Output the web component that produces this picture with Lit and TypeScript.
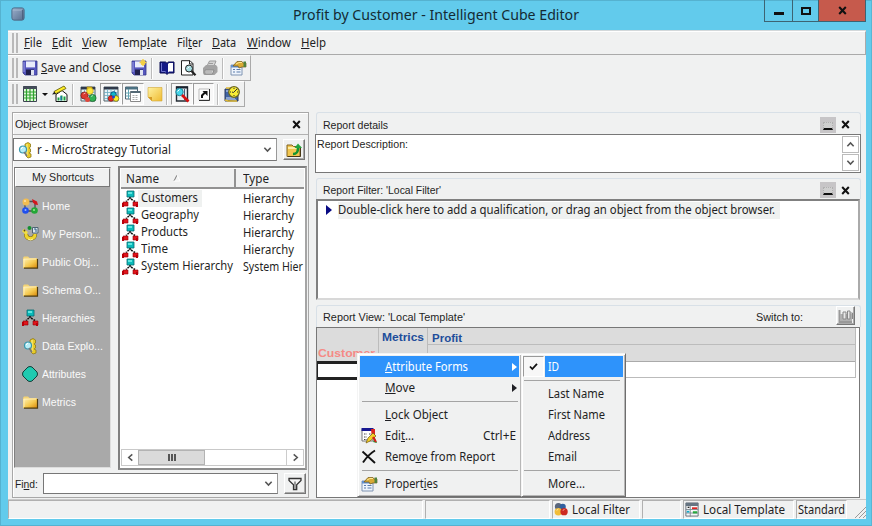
import { LitElement, html, css, svg, nothing } from "lit";
import type { TemplateResult } from "lit";
import { customElement, property, query } from "lit/decorators.js";
import { styleMap } from "lit/directives/style-map.js";

/* A single line label whose glyphs are condensed or stretched to a set width. */
@customElement("fit-text")
class FitText extends LitElement {
  static styles = css`
    :host { display: inline-block; flex: none; white-space: nowrap; }
    .in { display: inline-block; transform-origin: 0 50%; }
  `;
  @property({ type: Number }) w = 0;
  @query(".in") inner!: HTMLElement;

  render() {
    return html`<span class="in"><slot></slot></span>`;
  }

  updated() {
    const natural = this.inner.offsetWidth;
    if (!natural || !this.w) return;
    this.style.width = `${this.w}px`;
    this.inner.style.transform = `scaleX(${this.w / this.inner.getBoundingClientRect().width})`;
  }
}

const floppy = svg`<path d="M1 1h14v14H3l-2-2z" fill="#5556bd" stroke="#34358c" stroke-width=".8"/><path d="M4 1.4h9v6H4z" fill="#e9ecfb"/><path d="M4 9.5h8V15H4z" fill="#20214e"/><path d="M9 10h3v5H9z" fill="#dfe3f1"/><path d="M2 2v10" stroke="#9fa0ea"/>`;
const tree = svg`<path d="M5 0h7v6H5z" fill="#0ababa" stroke="#056c72" stroke-width=".8"/><path d="M6 1h4v2H6z" fill="#5ee6e0"/><path d="M8 6v3M7 8L4 10.500M9 8l4 2.500" stroke="#111" stroke-width="1.500" stroke-dasharray="2 1"/><path d="M1 11h5v4H1zM11 11h5v4h-5z" fill="#e2141b" stroke="#8d0008" stroke-width=".6"/><path d="M0 12h2v4H0zM14 13h2v3h-2z" fill="#b80009"/>`;
const folder = svg`<defs><linearGradient id="f" x2="1" y2="1"><stop stop-color="#fff0b0"/><stop offset=".55" stop-color="#f5c84c"/><stop offset="1" stop-color="#d98a0c"/></linearGradient></defs><path d="M1 4l1-1.500h4L7.500 4H15v10H1z" fill="#f3d375"/><path d="M1.500 5H15v9H1.500z" fill="url(#f)"/><path d="M2 14.200h13.500V5" fill="none" stroke="#4f3c10" stroke-width="1.200"/><path d="M2 13V5h12" fill="none" stroke="#fff3c4" stroke-width=".8"/>`;
const gridBase = svg`<path d="M1 1h14v14H1z" fill="#e9f3f6" stroke="#52636b"/><path d="M1 1h14v2.500H1z" fill="#30394a"/><path d="M4.500 3v12M8 3v12M11.500 3v12M1 6.500h14M1 9.500h14M1 12.500h14" stroke="#6babc0" stroke-width=".8"/>`;
const hand = svg`<path d="M1 5h11v10H1z" fill="#eef4fc" stroke="#7e94b2"/><path d="M1 5h11v2.500H1z" fill="#608fce"/><path d="M3 9.500h2M3 12h2M6.500 9.500h4M6.500 12h4" stroke="#5a7cab"/><path d="M3 6l4-4.500h5L13 3h3v4h-4L9 8 8 6H4z" fill="#d8a935" stroke="#755a1a" stroke-width=".7"/><path d="M13.500 1.500H16V7h-2.500z" fill="#51823c"/><path d="M6 4l3-1.500h3" stroke="#ffe890" fill="none"/>`;
const explore = svg`<path d="M8 2l3-1.500L13.500 2v3L12 6l1.500 1v3L12 11l2 1v3l-3 1-2-2V9L8 5z" fill="#e8cb26" stroke="#8f7a17" stroke-width=".8"/><path d="M10 2v12" stroke="#fff49b"/><circle cx="6" cy="7.500" r="3.500" fill="#b7edf6" stroke="#3897ad" stroke-width="1.200"/><path d="M7 10l3 4" stroke="#777" stroke-width="1.500"/><path d="M4 7l2-2" stroke="#fff"/>`;

const icons: Record<string, TemplateResult | ReturnType<typeof svg>> = {
  floppy,
  floppyNew: svg`${floppy}<path d="M12-1v7M8.500 2.500h7M10 .5l4 4M14 .5l-4 4" stroke="#f4ce45" stroke-width="1.400"/>`,
  book: svg`<path d="M1 2h5.500L8 3.300 9.500 2H15v11H9.500L8 14.500 6.500 13H1z" fill="#151a86" stroke="#0a0d50"/><path d="M9 4l1-1h4v8.500h-4l-1 1z" fill="#fff"/><path d="M2.500 3v8.500H6l1 .8" fill="none" stroke="#6d73cd"/>`,
  preview: svg`<path d="M1.500.7h8.500l3 3V15H1.500z" fill="#fff" stroke="#222"/><path d="M9.500 1v3H13" fill="none" stroke="#222"/><circle cx="9" cy="8.500" r="3.500" fill="#a6dde1" stroke="#222"/><path d="M11.500 11l4 4.300" stroke="#222" stroke-width="2.200"/><path d="M7.500 8.500L9.500 6.500" stroke="#fff"/>`,
  printer: svg`<path d="M5 6l2.500-5H14l-2 5z" fill="#d4d4d4" stroke="#999"/><path d="M1 8l3-3h10l1.500 2v5l-3 3H2l-1-2z" fill="#a3a3a3"/><path d="M3 10h9l-1.500 4H3z" fill="#dadada" stroke="#8b8b8b"/><path d="M4 12h6M7 3.500h4" stroke="#9b9b9b"/>`,
  props: hand,
  grid: svg`<path d="M1.500.5h13v15h-13z" fill="#e6f9de" stroke="#3c4451"/><path d="M1 .5h14v2.500H1z" fill="#454d5a"/><path d="M4.500 3v12M8 3v12M11.500 3v12M1.500 6h13M1.500 9h13M1.500 12h13" stroke="#2da32d" stroke-width="1.200"/>`,
  chart: svg`<path d="M4 8.500L10 4.500l5 4v7H4z" fill="#fff" stroke="#111"/><path d="M6.500 14.500v-3M9.500 14.500V9.500M12.500 14.500v-4" stroke="#17a040" stroke-width="2"/><path d="M9 14.500V10" stroke="#1565d6"/><path d="M2 5.500L12 0l2 2.500L3 8z" fill="#ffed26" stroke="#6b6510" stroke-width=".9"/><path d="M0 8.500l2.500-3L4 8z" fill="#222"/>`,
  stack: svg`${gridBase}<path d="M7 1h5v4.500l-2 2-3-2z" fill="#f4d229" stroke="#a38208" stroke-width=".7"/><circle cx="4.500" cy="9.500" r="3.600" fill="#d93830" stroke="#7d1813" stroke-width=".7"/><circle cx="12.500" cy="12" r="3.600" fill="#32b253" stroke="#155f28" stroke-width=".7"/><circle cx="7.500" cy="13.500" r="2.500" fill="#e1463b"/><circle cx="10" cy="5" r="3.300" fill="#ffe83c" stroke="#a38208" stroke-width=".5"/><path d="M3.500 8l2-1M11 10.500l2-1" stroke="#fff" stroke-opacity=".6"/>`,
  gridBalls: svg`${gridBase}<circle cx="10.500" cy="8.500" r="2.800" fill="#11b7c7" stroke="#064e83"/><circle cx="8" cy="12.500" r="2.800" fill="#eb2b23" stroke="#76100d" stroke-width=".7"/><circle cx="13" cy="12.500" r="2.800" fill="#fff127" stroke="#78720b" stroke-width=".7"/><circle cx="10.500" cy="11" r="1.500" fill="#2440d0"/>`,
  gridPages: svg`<path d="M.5 1h12v12H.5z" fill="#fff" stroke="#516370"/><path d="M.5 1h12v2.500H.5z" fill="#4b7182"/><path d="M3.500 3v10M.5 7h5M.5 10h5" stroke="#62a4b2"/><path d="M5.500 5.500h10v10h-10z" fill="#fff" stroke="#888"/><path d="M5.500 6h10" stroke="#536874" stroke-width="2"/><path d="M7.500 9.500h6M7.500 11.500h6M7.500 13.500h6" stroke="#aaa" stroke-dasharray="2 1"/>`,
  note: svg`<defs><linearGradient id="n" x2="1" y2="1"><stop stop-color="#fff2a1"/><stop offset="1" stop-color="#efbb31"/></linearGradient></defs><path d="M1 1.500h14V15H5l-4-4z" fill="url(#n)" stroke="#d0a636" stroke-width=".6"/><path d="M1 11l4 4v-4z" fill="#d59b26"/>`,
  search: svg`<path d="M2.500 1h11v14h-11z" fill="#e6edf1" stroke="#252c35" stroke-width="1.400"/><path d="M2 1.500h12" stroke="#1b222f" stroke-width="2"/><path d="M10.500 3v11" stroke="#4a5b78"/><circle cx="5.500" cy="6" r="3.700" fill="#46d5e9" stroke="#238194"/><path d="M8 9l6.500 6.500" stroke="#d91010" stroke-width="2.600"/><path d="M3.500 5.500l2-2" stroke="#fff"/>`,
  shortcut: svg`<path d="M3 3h10.500v11H3z" fill="#fff" stroke="#bbb"/><path d="M13.500 3v11.500H3" fill="none" stroke="#333"/><path d="M6 12V9.500L9 6.500" fill="none" stroke="#111" stroke-width="2"/><path d="M6.500 5h5v5z" fill="#111"/>`,
  clock: svg`<path d="M1 3h9l4 3v9H1z" fill="#4265a4" stroke="#28385e"/><path d="M2 5h7M2 12h9M2 14h10" stroke="#d8e5f8"/><path d="M2 2h6M1 14l3 1h9" stroke="#e0ba36" stroke-width="1.700"/><circle cx="10" cy="6" r="5.300" fill="#f7ec35" stroke="#6c6720" stroke-width="1.300"/><path d="M13 3l-3.500 3.500L8 6M10 2v1M10 10v-1M6 6h1M13 6h1" fill="none" stroke="#303030"/>`,
  tree, folder, explore,
  home: svg`<path d="M5 3.500h6M13 5v6M11 13H5M3 11V5" stroke="#4b4e50" stroke-width="1.300"/><circle cx="4" cy="4" r="3.500" fill="#f2bd51"/><path d="M10 1l5 2.500 1 3.500-3-.5-2-2z" fill="#d3171d"/><circle cx="3.500" cy="12.500" r="3.300" fill="#2050ee"/><circle cx="12.500" cy="12.500" r="3.300" fill="#23a736"/><circle cx="3" cy="3" r="1" fill="#ffe4ad"/><circle cx="3.500" cy="12" r="1" fill="#95b5ff"/><circle cx="12" cy="12" r="1" fill="#93ed8c"/>`,
  personal: svg`<path d="M4 8c0 3 2 4.500 4.500 4.500S13 11 13 8" fill="none" stroke="#806d10" stroke-width="4.200"/><path d="M4 8c0 3 2 4.500 4.500 4.500S13 11 13 8" fill="none" stroke="#efd52c" stroke-width="3"/><path d="M1 4l4 3.500" stroke="#f2df42" stroke-width="3"/><circle cx="7.500" cy="2" r="2" fill="#138f31"/><path d="M10.500 1.500H16V7h-5.500z" fill="#dbe7ed" stroke="#4e6474"/><path d="M12 3h2v3" stroke="#315c85" fill="none"/><path d="M6 13l2.500 1 2.500-1" fill="none" stroke="#fff8a0"/><circle cx="2.500" cy="4.500" r=".9" fill="#544515"/>`,
  attribute: svg`<path d="M8 .5l2 .5 5 5 .5 2-.5 2-5 5-2 .5-2-.5-5-5L.5 8 1 6l5-5z" fill="#1fcab0" stroke="#143e39"/>`,
  up: svg`<path d="M1 3h5l1.500 1.500H14v10H1z" fill="#f2c64f" stroke="#836420"/><path d="M2 5h11v2H2z" fill="#ffeda3"/><path d="M7 12c4 0 5-2 5-6" fill="none" stroke="#159431" stroke-width="2.600"/><path d="M8.500 6L12 1.500 16 6z" fill="#22a63c"/><path d="M2 14.500h12.500V6" stroke="#483816" fill="none"/>`,
  funnel: svg`<path d="M2 2.500h12v2L9.700 8.800V13.500H6.500V8.800L2 4.500z" fill="#f5f5f5" stroke="#333" stroke-width="1.300"/><path d="M8 5.500v7.500" stroke="#999" stroke-width="2"/>`,
  edit: svg`<path d="M1 1.500h11v11.500H1z" fill="#fff" stroke="#777"/><path d="M.5 1.500h12" stroke="#171891" stroke-width="3"/><path d="M3 6h3M3 9h3M3 11.500h3M8 6h2" stroke="#444" stroke-dasharray="1.500 1"/><path d="M10 1h4v10h-3z" fill="#db251f"/><path d="M14 10l2 5-4-1" fill="#19902b"/><path d="M5 15l2-5 5-5 3 3-6 5z" fill="#f3d02a" stroke="#73570b" stroke-width=".7"/><path d="M12 9l3 5" stroke="#d71d18" stroke-width="2"/>`,
  remove: svg`<path d="M1.500 2.500L14 14M14 1.500C9 4.500 5 9 2 13.500" fill="none" stroke="#111" stroke-width="1.900"/>`,
  filter: svg`<circle cx="5" cy="4.500" r="4" fill="#59677d"/><circle cx="10" cy="5" r="3.500" fill="#305f9f"/><circle cx="5" cy="10.500" r="4.300" fill="#f2bd38"/><circle cx="11.500" cy="10.500" r="4.200" fill="#cd2920"/><path d="M3 9l2-1.500M10 9l2-1" stroke="#fff" stroke-opacity=".7"/>`,
  template: svg`<path d="M1 .5h14v15H1z" fill="#f5f7f8" stroke="#5c6570"/><path d="M1 .5h14v3.500H1z" fill="#657482"/><path d="M6 4v12M1 8h14M1 12h14" stroke="#7b858e"/><path d="M8 5.500h6v2H8z" fill="#df2422"/><path d="M9 10h5v2.500H9z" fill="#25a73d"/><path d="M2 9.500h3v2H2z" fill="#13a9c7"/><path d="M3 5.500h2" stroke="#222" stroke-width="1.500"/>`,
  graph: svg`<path d="M1.500 2v12H14" fill="none" stroke="#999" stroke-width="2"/><path d="M2 6h12v7H2z" fill="#b0b0b0"/><path d="M5 11V4h3v7zM9.500 11V3H12v8z" fill="#e8e8e8" stroke="#888"/><path d="M12 5h2.500v6" fill="none" stroke="#888"/>`,
  app: svg`<defs><linearGradient id="a" x2="1" y2="1"><stop stop-color="#9bb0cb"/><stop offset="1" stop-color="#576e8e"/></linearGradient></defs><rect x="1" y="1" width="14" height="14" rx="2.500" fill="url(#a)" stroke="#49627f"/><path d="M2 3.500h10l1.500-1.500" stroke="#a9bad0" fill="none"/><path d="M13.300 3v11" stroke="#475a78"/>`,
};

const icon = (name: string, cls = "") =>
  html`<svg class="ic ${cls}" viewBox="0 0 16 16">${icons[name]}</svg>`;
const cross = (cls = "") =>
  html`<svg class="cross ${cls}" viewBox="0 0 9 9"><path d="M1.200 1L7.800 8M7.800 1L1.200 8" stroke="#111" stroke-width="2"/></svg>`;
const chev = (d: string) =>
  html`<svg class="chev" viewBox="0 0 10 10"><path d=${d} fill="none" stroke="#555" stroke-width="1.700"/></svg>`;
const DOWN = "M1.500 3L5 6.800 8.500 3";
const UP = "M1.500 7L5 3.200 8.500 7";
const LEFT = "M7 1.500L3 5l4 3.500";
const RIGHT = "M3 1.500L7 5 3 8.500";

interface MenuEntry { label: unknown; w: number; arrow?: boolean; key?: string; icon?: string; on?: boolean }

@customElement("app-root")
class AppRoot extends LitElement {
  static styles = css`
    * { box-sizing: border-box; }
    :host { display: block; width: 872px; height: 526px; overflow: hidden; }
    .win { position: relative; width: 872px; height: 526px; background: #62cbec; border: 1px solid #55b2d0; border-right-color: #57b7d5; display: flex; flex-direction: column; padding: 0 5px 6px 7px; font: 12px/16px "Noto Sans", "Open Sans", sans-serif; color: #1f1f24; }
    svg { display: block; flex: none; }
    .ic { width: 16px; height: 16px; overflow: visible; }
    .title { height: 29px; flex: none; display: flex; align-items: flex-start; padding-left: 3px; }
    .title .ic { width: 14px; height: 14px; margin-top: 6px; }
    .title .cap { margin: 3px 0 0 268px; font-size: 15px; line-height: 20px; color: #142a33; }
    .wb { display: flex; margin: -1px 0 0 auto; height: 22px; border: 1px solid #3d6473; border-top: 0; }
    .wb div { display: flex; align-items: center; justify-content: center; border-right: 1px solid #3d6473; }
    .wb .mn { width: 28px; } .wb .mx { width: 26px; } .wb .cl { width: 46px; border: 0; background: #c65a4c; }
    .dash { width: 10px; height: 3px; background: #111; margin-top: 5px; }
    .box { width: 10px; height: 8px; border: 2px solid #111; }
    .cross { width: 9px; height: 9px; }
    .client { flex: 1; min-height: 0; background: #f0f1f1; display: flex; flex-direction: column; border-top: 1px solid #d3d8da; }
    .bar { flex: none; display: flex; align-items: center; border-right: 1px solid #aaa; border-bottom: 1px solid #aaa; border-top: 1px solid #fff; align-self: flex-start; }
    .grip { width: 6px; height: 20px; margin-left: 4px; border: solid #b9b9b9; border-width: 0 2px; flex: none; }
    .menubar { width: 858px; height: 24px; }
    .menubar .names { display: flex; gap: 10.1px; margin-left: 5.5px; }
    .t1 { height: 26px; width: 243px; } .t2 { height: 26px; width: 237px; }
    .slot { display: flex; align-items: center; justify-content: center; flex: none; height: 22px; }
    .on { border: 1px solid; border-color: #9b9b9b #fff #fff #9b9b9b; background: #f8f8f8; }
    .sep { width: 2px; height: 21px; background: #bbb; border-right: 1px solid #fff; flex: none; }
    .caret { border: 3px solid transparent; border-top-color: #111; border-bottom: 0; }
    .w3 { width: 3px; } .w4 { width: 4px; } .w5 { width: 5px; } .w6 { width: 6px; } .w10 { width: 10px; }
    .main { flex: 1; min-height: 0; display: flex; padding: 5px 5px 0 4px; gap: 6px; }
    .left { width: 297px; height: 386px; border: 1px solid #a8a8a8; flex: none; box-shadow: inset 1px 1px #fff; }
    .ms { font-family: "Liberation Sans", Arial, sans-serif; font-size: 11px; line-height: 14px; }
    .lhead { height: 22px; display: flex; align-items: center; justify-content: space-between; padding: 1px 7px 0 2px; border-bottom: 1px solid #b1b1b1; }
    .row { display: flex; }
    .drop { border: 1px solid #777; border-right-color: #999; background: #fff; display: flex; align-items: center; justify-content: space-between; padding-right: 4px; width: 264px; height: 23px; }
    .drop .val { display: flex; align-items: center; gap: 4px; padding-left: 3px; }
    .chev { width: 9px; height: 9px; }
    .btn { width: 22px; height: 21px; border: 1px solid; border-color: #fff #777 #777 #fff; box-shadow: inset -1px -1px #aaa; display: flex; align-items: center; justify-content: center; }
    .r1 { margin-top: 3px; gap: 6px; align-items: center; }
    .r2 { margin: 5px 0 0 1px; height: 304px; gap: 7px; }
    .short { width: 97px; height: 301px; margin-top: 1px; background: #a9a9a9; border: 1px solid; border-color: #707070 #ddd #ddd #808080; }
    .shead { height: 19px; background: #f0f1f1; border: 1px solid; border-color: #fff #777 #777 #fff; text-align: center; padding-top: 1px; }
    .sitems { display: flex; flex-direction: column; color: #fafafa; padding-top: 5px; }
    .sitem { height: 28px; display: flex; align-items: center; gap: 4px; padding-left: 7px; }
    .list { width: 189px; height: 304px; border: 2px solid; border-color: #808080 #a5a5a5 #8c8c8c #808080; background: #fff; display: flex; flex-direction: column; overflow: hidden; padding: 0 1px 2px; }
    .cols { display: flex; height: 21px; background: #f0f1f1; border-top: 1px solid #fff; border-bottom: 2px solid #929292; flex: none; }
    .c1 { width: 115px; padding: 2px 0 0 5px; border-right: 2px solid #929292; display: flex; gap: 14px; }
    .c2 { padding: 2px 0 0 7px; }
    .sort { width: 8px; height: 8px; margin-top: 3px; }
    .rows { flex: 1; padding-top: 1px; }
    .lr { display: flex; height: 17px; align-items: center; margin-left: 1px; }
    .lr .nm { width: 105px; height: 17px; display: flex; flex: none; } .lr .nm span { padding: 0 4px 0 3px; height: 17px; }
    .lr .sel { background: #eff1f0; }
    .hs { display: flex; height: 17px; border: 1px solid #c9c9c9; flex: none; }
    .hs .e { width: 16px; display: flex; align-items: center; justify-content: center; }
    .thumb { width: 67px; background: #dadada; border: 1px solid #b3b3b3; display: flex; gap: 1px; align-items: center; justify-content: center; }
    .thumb i { width: 2px; height: 7px; background: #555; }
    .hs .fill { flex: 1; border-right: 1px solid #ccc; }
    .r3 { margin-top: 3px; align-items: center; gap: 6px; }
    .r3 .ms { width: 24px; padding-left: 2px; }
    .r3 .drop { width: 235px; height: 21px; }
    .right { flex: 1; display: flex; flex-direction: column; min-width: 0; }
    .ph { height: 22px; border: 1px solid #d8e0e7; border-bottom: 0; border-radius: 3px 3px 0 0; margin: 0 0 0 1px; display: flex; align-items: center; padding: 2px 10px 0 6px; flex: none; }
    .ph .mini { margin-left: auto; width: 16px; height: 16px; background: #c7c5c7; display: flex; align-items: flex-end; justify-content: center; padding-bottom: 3px; }
    .mini i { height: 8px; width: 10px; border: 1px dotted #b0b0b0; border-bottom: 2px solid #111; background: #cfcfcf; }
    .ph .cross { margin-left: 5px; }
    .ph.view { padding-right: 5px; padding-top: 0; }
    .ph.view .sw { width: 19px; height: 19px; margin: -2px 0 0 33px; }
    .details { height: 39px; border: 1px solid #777; background: #fff; display: flex; justify-content: space-between; padding: 2px 1px 0 1px; flex: none; }
    .details .sb { display: flex; flex-direction: column; gap: 1px; margin-top: -1px; }
    .sb div { width: 17px; height: 17px; border: 1px solid #bbb; display: flex; align-items: center; justify-content: center; }
    .filter { height: 101px; border: 2px solid; border-color: #808080 #aaa #d8d8d8 #808080; background: #fff; margin: 0 1px; padding: 1px 0 0 8px; display: flex; align-items: flex-start; flex: none; }
    .filter .tri { border: 5px solid transparent; border-left: 6px solid #080a83; border-right: 0; margin-top: 3px; }
    .filter .q { background: #eff1f0; margin-left: 6px; padding: 0 5px 0 0; height: 17px; }
    .p2 { margin-top: 5px; height: 21px; } .p3 { margin-top: 5px; }
    .report { height: 171px; border: 1px solid #777; background: #fff; padding-right: 3px; margin: 0 1px; font: bold 11px/14px "Liberation Sans", Arial, sans-serif; color: #214d9b; flex: none; }
    .gh { height: 34px; display: flex; background: #dcdcdc; border-bottom: 1px solid #aaa; border-right: 1px solid #bbb; }
    .g1 { width: 62px; border-right: 1px solid #bcbcbc; display: flex; align-items: flex-end; padding: 0 0 1px 1px; color: #f58a86; }
    .g2 { width: 49px; border-right: 1px solid #bcbcbc; padding: 2px 0 0 3px; }
    .g3 { flex: 1; } .g3 .up { height: 17px; border-bottom: 1px solid #bcbcbc; padding: 3px 0 0 4px; }
    .gr { height: 17px; border: solid #bbb; border-width: 0 1px 1px 0; }
    .cell { width: 62px; height: 19px; border: 3px solid #222; margin-top: -1px; border-left-width: 1px; }
    .status { height: 20px; flex: none; display: flex; gap: 2px; border-top: 1px solid #c9c9c9; }
    .pane { border: 1px solid; border-color: #b0b0b0 #fff #fff #b0b0b0; display: flex; align-items: center; gap: 4px; padding-left: 1px; height: 19px; flex: none; }
    .pane .ic { width: 14px; height: 15px; }
    .rz { width: 12px; height: 12px; margin: 6px 0 0 5px; }
    .menu { position: absolute; background: #f0f1f1; border: 1px solid; border-color: #f4f4f4 #6e6e6e #6e6e6e #f4f4f4; padding: 2px; box-shadow: inset 1px 1px #fff, inset -1px -1px #b7b7b7; }
    .m1 { left: 356px; top: 352px; width: 165px; height: 144px; }
    .m2 { left: 520px; top: 352px; width: 105px; height: 144px; }
    .mi { height: 21px; display: flex; align-items: center; }
    .mi .gut { width: 25px; display: flex; flex: none; padding-left: 1px; }
    .hi { background: #2e93fb; color: #fff; }
    .ms2 { height: 6px; display: flex; align-items: center; margin: 0 1px 0 2px; } .ms2::after { content: ""; flex: 1; height: 1px; background: #a4a4a4; }
    .arr { border: 4px solid transparent; border-left: 5px solid currentColor; border-right: 0; margin-left: auto; margin-right: 2px; }
    .key { margin-left: auto; margin-right: 3px; display: flex; }
    .view .key { margin-right: 0; }
    .chk { width: 21px; height: 21px; border: 1px solid; border-color: #999 #fff #fff #999; background: #f7f7f7; display: flex; align-items: center; justify-content: center; margin-left: -1px; }
    .chk svg { width: 9px; height: 9px; }
    .m2 .idh { flex: 1; height: 21px; margin-left: 1px; padding: 3px 0 0 3px; }
    .m2 .plain { padding-left: 23.5px; }
    .m2 .ms2 { margin-right: 3px; margin-left: 0; }
  `;

  private entry(e: MenuEntry) {
    return html`<div class="mi ${e.on ? "hi" : ""}">
      <div class="gut">${e.icon ? icon(e.icon) : nothing}</div>
      <fit-text w=${e.w}>${e.label}</fit-text>
      ${e.arrow ? html`<div class="arr"></div>` : nothing}
      ${e.key ? html`<div class="key"><fit-text w="33">${e.key}</fit-text></div>` : nothing}
    </div>`;
  }

  private slotBtn(name: string, width: number, on = false) {
    return html`<div class="slot ${on ? "on" : ""}" style=${styleMap({ width: `${width}px` })}>${icon(name)}</div>`;
  }

  private panelHead(label: string, w: number, cls = "") {
    return html`<div class="ph ms ${cls}"><fit-text w=${w}>${label}</fit-text><div class="mini"><i></i></div>${cross()}</div>`;
  }

  render() {
    const menus: [unknown, number][] = [
      [html`<u>F</u>ile`, 18], [html`<u>E</u>dit`, 20], [html`<u>V</u>iew`, 25], [html`Temp<u>l</u>ate`, 50],
      [html`Fil<u>t</u>er`, 25.5], [html`<u>D</u>ata`, 24], [html`<u>W</u>indow`, 44], [html`<u>H</u>elp`, 25],
    ];
    const shortcuts: [string, string, number][] = [
      ["home", "Home", 28], ["personal", "My Person...", 59], ["folder", "Public Obj...", 57], ["folder", "Schema O...", 59],
      ["tree", "Hierarchies", 53], ["explore", "Data Explo...", 61], ["attribute", "Attributes", 44], ["folder", "Metrics", 34],
    ];
    const rows: [string, number, string, number][] = [
      ["Customers", 57, "Hierarchy", 51], ["Geography", 58, "Hierarchy", 51], ["Products", 47, "Hierarchy", 51],
      ["Time", 27, "Hierarchy", 51], ["System Hierarchy", 92, "System Hier", 60],
    ];
    return html`<div class="win">
      <div class="title">${icon("app")}<div class="cap"><fit-text w="286">Profit by Customer - Intelligent Cube Editor</fit-text></div>
        <div class="wb"><div class="mn"><span class="dash"></span></div><div class="mx"><span class="box"></span></div><div class="cl">${cross()}</div></div>
      </div>
      <div class="client">
        <div class="bar menubar"><div class="grip"></div><div class="names">${menus.map(([l, w]) => html`<fit-text w=${w}>${l}</fit-text>`)}</div></div>
        <div class="bar t1"><div class="grip"></div><div class="w4"></div>
          ${icon("floppy")}<div class="w3"></div><fit-text w="80"><u>S</u>ave and Close</fit-text><div class="w10"></div>${icon("floppyNew")}
          <div class="w4"></div><div class="sep"></div><div class="w6"></div>${icon("book")}<div class="w5"></div>${icon("preview")}<div class="w6"></div>${icon("printer")}
          <div class="w4"></div><div class="sep"></div><div class="w6"></div>${icon("props")}
        </div>
        <div class="bar t2"><div class="grip"></div><div class="w4"></div>
          ${icon("grid")}<div class="w4"></div><div class="caret"></div><div class="w4"></div>${icon("chart")}
          <div class="w4"></div><div class="sep"></div><div class="w6"></div>${icon("stack")}<div class="w4"></div>
          ${this.slotBtn("gridBalls", 22, true)}${this.slotBtn("gridPages", 22, true)}${this.slotBtn("note", 22)}
          <div class="sep"></div><div class="w3"></div>${this.slotBtn("search", 22, true)}${this.slotBtn("shortcut", 21, true)}
          <div class="w3"></div><div class="sep"></div><div class="w5"></div>${icon("clock")}
        </div>
        <div class="main">
          <div class="left">
            <div class="lhead ms"><fit-text w="73">Object Browser</fit-text>${cross()}</div>
            <div class="row r1"><div class="drop"><div class="val">${icon("explore")}<fit-text w="134">r - MicroStrategy Tutorial</fit-text></div>${chev(DOWN)}</div><div class="btn">${icon("up")}</div></div>
            <div class="row r2">
              <div class="short ms"><div class="shead"><fit-text w="62">My Shortcuts</fit-text></div>
                <div class="sitems">${shortcuts.map(([i, l, w]) => html`<div class="sitem">${icon(i)}<fit-text w=${w}>${l}</fit-text></div>`)}</div>
              </div>
              <div class="list">
                <div class="cols"><div class="c1"><fit-text w="33">Name</fit-text><svg class="sort" viewBox="0 0 8 8"><path d="M1 7L4 1" stroke="#777"/><path d="M4 1l3 6H1" stroke="#fff" fill="none"/></svg></div><div class="c2"><fit-text w="26">Type</fit-text></div></div>
                <div class="rows">${rows.map(([n, nw, t, tw], i) => html`<div class="lr">${icon("tree")}<div class="nm"><span class=${i === 0 ? "sel" : ""}><fit-text w=${nw}>${n}</fit-text></span></div><fit-text w=${tw}>${t}</fit-text></div>`)}</div>
                <div class="hs"><div class="e">${chev(LEFT)}</div><div class="thumb"><i></i><i></i><i></i></div><div class="fill"></div><div class="e">${chev(RIGHT)}</div></div>
              </div>
            </div>
            <div class="row r3"><div class="ms"><fit-text w="23">Fi<u>n</u>d:</fit-text></div><div class="drop"><span></span>${chev(DOWN)}</div><div class="btn">${icon("funnel")}</div></div>
          </div>
          <div class="right">
            ${this.panelHead("Report details", 65)}
            <div class="details ms"><fit-text w="91">Report Description:</fit-text><div class="sb"><div>${chev(UP)}</div><div>${chev(DOWN)}</div></div></div>
            ${this.panelHead("Report Filter: 'Local Filter'", 118, "p2")}
            <div class="filter"><div class="tri"></div><div class="q"><fit-text w="437">Double-click here to add a qualification, or drag an object from the object browser.</fit-text></div></div>
            <div class="ph ms p3 view"><fit-text w="142">Report View: 'Local Template'</fit-text><div class="key"><fit-text w="47">Switch to:</fit-text></div><div class="btn sw">${icon("graph")}</div></div>
            <div class="report">
              <div class="gh"><div class="g1"><fit-text w="57">Customer</fit-text></div><div class="g2"><fit-text w="42">Metrics</fit-text></div><div class="g3"><div class="up"><fit-text w="30">Profit</fit-text></div></div></div>
              <div class="gr"><div class="cell"></div></div>
            </div>
          </div>
        </div>
        <div class="status">
          ${([[415, 0], [125, 0], [88, 1], [39, 0], [111, 2], [51, 3]] as [number, number][]).map(([w, k]) => html`<div class="pane" style=${styleMap({ width: `${w}px` })}>
            ${k === 1 ? html`${icon("filter")}<fit-text w="58">Local Filter</fit-text>` : k === 2 ? html`${icon("template")}<fit-text w="82">Local Template</fit-text>` : k === 3 ? html`<fit-text w="47">Standard</fit-text>` : nothing}</div>`)}
          <svg class="rz" viewBox="0 0 12 12"><path d="M1 12L12 1M5 12l7-7M9 12l3-3" stroke="#999"/></svg>
        </div>
      </div>
      <div class="menu m1">
        ${this.entry({ label: html`<u>A</u>ttribute Forms`, w: 83, arrow: true, on: true })}
        ${this.entry({ label: html`<u>M</u>ove`, w: 30, arrow: true })}
        <div class="ms2"></div>
        ${this.entry({ label: html`<u>L</u>ock Object`, w: 63 })}
        ${this.entry({ label: html`Edi<u>t</u>...`, w: 29, key: "Ctrl+E", icon: "edit" })}
        ${this.entry({ label: html`Remo<u>v</u>e from Report`, w: 110, icon: "remove" })}
        <div class="ms2"></div>
        ${this.entry({ label: html`Propert<u>i</u>es`, w: 53, icon: "props" })}
      </div>
      <div class="menu m2">
        <div class="mi"><div class="chk"><svg viewBox="0 0 9 9"><path d="M1 4.500L3.300 7 8 1.800" fill="none" stroke="#111" stroke-width="1.800"/></svg></div><div class="idh hi"><fit-text w="11">ID</fit-text></div></div>
        <div class="ms2"></div>
        ${([["Last Name", 56], ["First Name", 57], ["Address", 42], ["Email", 29]] as [string, number][]).map(([l, w]) => html`<div class="mi plain"><fit-text w=${w}>${l}</fit-text></div>`)}
        <div class="ms2"></div>
        <div class="mi plain"><fit-text w="37">More...</fit-text></div>
      </div>
    </div>`;
  }
}
